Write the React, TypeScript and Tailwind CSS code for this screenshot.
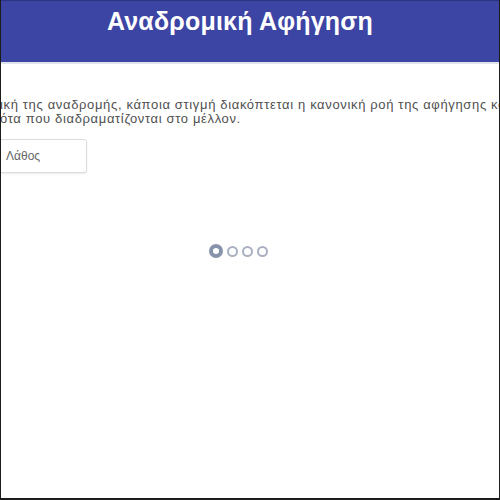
export default function App() {
  return (
    <div className="w-[500px] h-[500px] overflow-hidden bg-white border-l border-r border-b-2 border-[#1c1c1c] flex flex-col" style={{ fontFamily: '"Liberation Sans", Arial, sans-serif' }}>
      <header className="h-[62px] bg-[#3c44a4] border-t border-[#2c3380] flex justify-center shrink-0 pr-[20px]">
        <h1 className="text-white font-bold text-[25px] tracking-[0.2px] leading-none mt-[8px] whitespace-nowrap">Αναδρομική Αφήγηση</h1>
      </header>
      <div className="h-[2px] bg-[#dfe3ee] shrink-0" />
      <div className="flex flex-col pt-[34px] overflow-hidden">
        <p className="text-[#505050] text-[13px] leading-[14px] tracking-[0.65px] whitespace-nowrap -ml-[1px]">
          <span className="block">ική της αναδρομής, κάποια στιγμή διακόπτεται η κανονική ροή της αφήγησης και</span>
          <span className="block">ότα που διαδραματίζονται στο μέλλον.</span>
        </p>
        <div className="mt-[13px] -ml-[4px]">
          <button className="w-[90px] h-[34px] border border-[#dcdcdc] rounded-[3px] shadow-[0_1px_2px_rgba(0,0,0,0.08)] bg-white text-left pl-[8px] text-[12px] text-[#666]">Λάθος</button>
        </div>
        <div className="flex items-center gap-[4px] ml-[208px] mt-[71px]">
          <span className="w-[14px] h-[14px] rounded-full border-[4px] border-[#8792ab] bg-white" />
          <span className="w-[11px] h-[11px] rounded-full border-[2px] border-[#a9b0c0] bg-white" />
          <span className="w-[11px] h-[11px] rounded-full border-[2px] border-[#a9b0c0] bg-white" />
          <span className="w-[11px] h-[11px] rounded-full border-[2px] border-[#a9b0c0] bg-white" />
        </div>
      </div>
    </div>
  );
}
